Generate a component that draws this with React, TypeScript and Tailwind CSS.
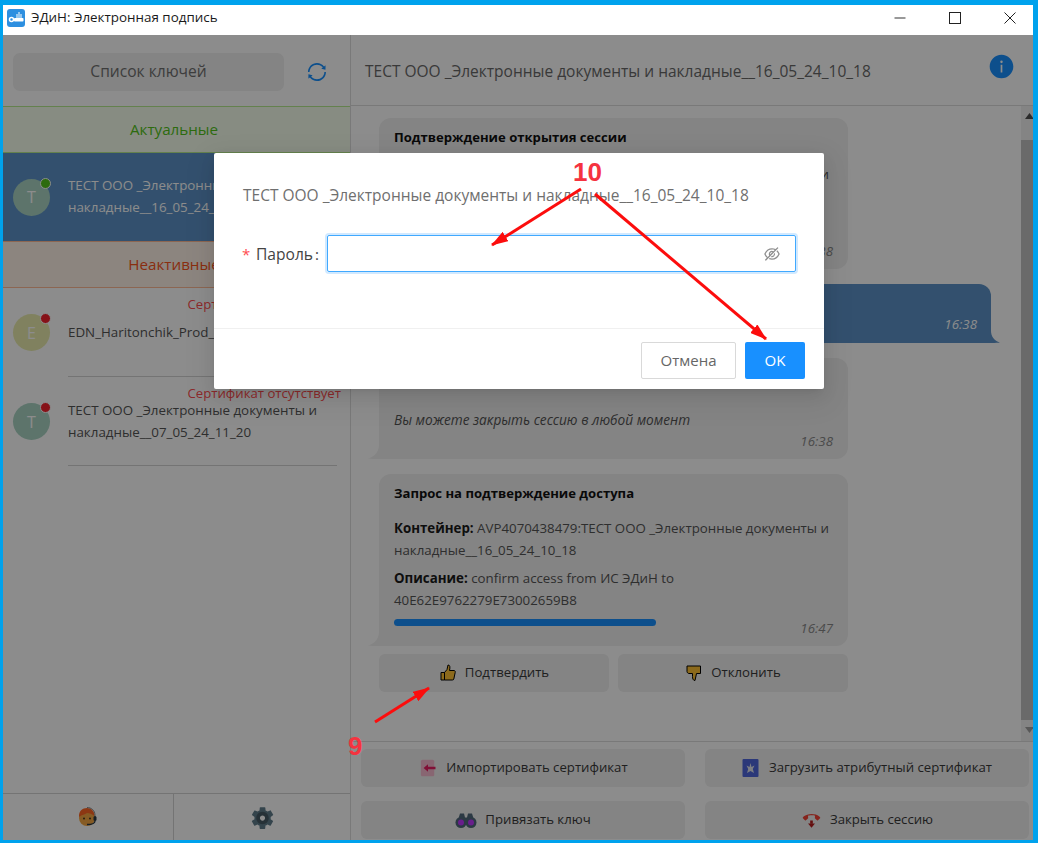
import type { ReactNode } from 'react'
import { AiFillInfoCircle, AiOutlineEyeInvisible, AiOutlineSync } from 'react-icons/ai'
import { FcEndCall, FcImport, FcSettings } from 'react-icons/fc'

function Avatar({ letter, color, dot }: { letter: string; color: string; dot: string }) {
  return (
    <div className={`relative w-[37px] h-[37px] rounded-full flex items-center justify-center text-[16px] text-white shrink-0 ${color}`}>
      {letter}
      <span className={`absolute top-[-1px] right-[-1px] w-[11px] h-[11px] rounded-full border border-white ${dot}`}></span>
    </div>
  )
}

function BubbleTail({ color }: { color: string }) {
  return (
    <svg className="absolute left-[-11px] bottom-0" width="24" height="14" viewBox="0 0 24 14">
      <path d="M11 0C11 6 7 12 0 13.500C4 14 8 14 24 14V0z" fill={color} />
    </svg>
  )
}

function Bubble({ title, time, h, children }: { title?: string; time: string; h: string; children?: ReactNode }) {
  return (
    <div className={`relative w-[469px] shrink-0 rounded-[12px] bg-[#f0f0f0] px-[15px] pt-[8px] text-[13.3px] leading-[22px] text-[#555] ${h}`}>
      <BubbleTail color="#f0f0f0" />
      {title && <div className="relative font-bold text-[13.1px] text-[#111]">{title}</div>}
      {children}
      <span className="absolute right-[15px] bottom-[7px] italic text-[#888]">{time}</span>
    </div>
  )
}

function ActionButton({ icon, label }: { icon: ReactNode; label: string }) {
  return (
    <div className="h-[38px] rounded-[6px] bg-[#f0f0f0] flex items-center justify-center gap-[8px] text-[13.2px] text-[#3a3a3a]">
      {icon}
      {label}
    </div>
  )
}

function KeyRow({ letter, color, dot, note, lines }: { letter: string; color: string; dot: string; note: string; lines: string[] }) {
  return (
    <div className="relative h-[89px] flex items-center gap-[18px] pl-[10px] pr-[13px] shrink-0">
      <Avatar letter={letter} color={color} dot={dot} />
      <div className="flex-1 h-full border-b border-[#d4d4d4] flex flex-col justify-center text-[13.35px] leading-[22px] text-[#555]">
        <div className="absolute right-[9px] top-[5px] leading-[22px] text-[13.2px] text-[#ff4d4f]">{note}</div>
        {lines.map((l) => (
          <div key={l}>{l}</div>
        ))}
      </div>
    </div>
  )
}

function ThumbUp() {
  return (
    <svg width="18" height="18" viewBox="0 0 18 18">
      <path d="M2 8.500h3.500V16H2zM5.500 8.500L8 5.500 9 1c2 0 2.300 2 1.500 5.500H15c1 0 1.500 1 1.200 2l-1.400 6.500c-.2.700-.6 1-1.500 1H5.500z" fill="#ffc233" stroke="#000" strokeWidth="1" />
    </svg>
  )
}

function ThumbDown() {
  return (
    <svg width="18" height="18" viewBox="0 0 18 18">
      <path d="M2 2h13.500v7.500h-4L10 16.500c-2 0-2.500-2-2.500-4V9.500H4c-1 0-2-1-2-2z" fill="#ffc233" stroke="#000" strokeWidth="1" />
    </svg>
  )
}

function Binoculars() {
  return (
    <svg width="22" height="16" viewBox="0 0 22 16">
      <path d="M3 8l2-6.500h4l1 4h2l1-4h4l2 6.500z" fill="#50697c" />
      <circle cx="6" cy="10.500" r="5.500" fill="#50697c" />
      <circle cx="16" cy="10.500" r="5.500" fill="#50697c" />
      <circle cx="6" cy="10.500" r="3" fill="#c038ff" />
      <circle cx="16" cy="10.500" r="3" fill="#c038ff" />
    </svg>
  )
}

function AttrCert() {
  return (
    <svg width="19" height="20" viewBox="0 0 19 20">
      <rect x="0.500" y="1" width="16" height="18" rx="1" fill="#4f66dd" />
      <path d="M8.500 5l1 4 3-1.500-1.700 3.500 1.200 4-3.500-2-3.500 2 1.200-4L4.500 7.500l3 1.500z" fill="#e2e6ee" />
    </svg>
  )
}

function Operator() {
  return (
    <svg width="20" height="22" viewBox="0 0 20 22">
      <circle cx="9" cy="12" r="8" fill="#f5a742" />
      <path d="M1 11C.5 5 4.500 2 9 2s7.500 3.500 7.500 8C14 8 11.500 7 9 7 7 8.500 4 8.500 1 11z" fill="#ff6424" />
      <path d="M9 1.500c4.500 0 8 3 8 8v3" fill="none" stroke="#888" strokeWidth="1" />
      <rect x="15.500" y="10" width="3" height="5" rx="1.500" fill="#2c3a44" />
      <path d="M17 15c0 2.500-3 3.500-8 3.500" fill="none" stroke="#2c3a44" strokeWidth="1.300" />
      <circle cx="6" cy="12.500" r="0.900" fill="#33261a" />
      <circle cx="12" cy="12.500" r="0.900" fill="#33261a" />
    </svg>
  )
}

export default function App() {
  return (
    <div className="relative w-[1038px] h-[843px] bg-[#00a2ed] pl-[3px] pr-[5px] pt-[5px] pb-[3px] overflow-hidden font-['Open_Sans','Noto_Sans',sans-serif]">
      {/* title bar */}
      <div className="h-[30px] bg-white flex items-center pl-[4px] pb-[5px]">
        <div className="w-[18px] h-[18px] rounded-[3px] bg-[#2d8fe0] flex items-center justify-center">
          <svg width="16" height="13" viewBox="0 0 16 13">
            <circle cx="3.500" cy="8.500" r="2" fill="none" stroke="white" strokeWidth="1.500" />
            <rect x="6" y="7" width="9.500" height="3.500" rx="0.800" fill="white" />
            <path d="M9 7V3M11 7V1M13 7V3" stroke="white" strokeWidth="1" />
          </svg>
        </div>
        <span className="ml-[6px] text-[13.4px] text-[#1a1a1a]">ЭДиН: Электронная подпись</span>
        <div className="ml-auto mr-[17px] flex items-center gap-[43px]">
          <svg width="12" height="12" viewBox="0 0 12 12"><path d="M0.500 6H11.500" stroke="#777" strokeWidth="1.500" /></svg>
          <svg width="12" height="12" viewBox="0 0 12 12"><rect x="0.500" y="0.500" width="11" height="11" fill="none" stroke="#222" strokeWidth="1" /></svg>
          <svg width="12" height="12" viewBox="0 0 12 12"><path d="M0.500 0.500L11.500 11.500M11.500 0.500L0.500 11.500" stroke="#222" strokeWidth="1" /></svg>
        </div>
      </div>

      <div className="relative flex h-[805px] bg-white">
        {/* left column */}
        <div className="w-[348px] shrink-0 border-r border-[#dcdcdc] flex flex-col">
          <div className="h-[71px] shrink-0 flex items-center pl-[10px] pr-[22px] pt-[2px] gap-[22px]">
            <div className="w-[272px] h-[38px] rounded-[7px] bg-[#f0f0f0] flex items-center justify-center text-[15.6px] text-[#707070]">Список ключей</div>
            <AiOutlineSync size={22} className="text-[#1890ff]" />
          </div>
          <div className="h-[47px] shrink-0 bg-[#f6ffed] border-y border-[#b7eb8f] flex items-center justify-center pr-[5px] text-[15.2px] text-[#52c41a]">Актуальные</div>
          <div className="h-[88px] shrink-0 bg-[#5d93c8] flex items-center pl-[10px] gap-[18px]">
            <Avatar letter="T" color="bg-[#a9d3c3]" dot="bg-[#52c41a]" />
            <div className="text-[13.35px] leading-[22px] text-white whitespace-nowrap pb-[2px]">
              <div>ТЕСТ ООО _Электронные документы и</div>
              <div>накладные__16_05_24_10_18</div>
            </div>
          </div>
          <div className="h-[47px] shrink-0 bg-[#fff2e8] border-y border-[#ffbb96] flex items-center justify-center pr-[5px] text-[15.2px] text-[#fa541c]">Неактивные</div>
          <KeyRow letter="E" color="bg-[#e9ecad]" dot="bg-[#f5222d]" note="Сертификат отсутствует" lines={['EDN_Haritonchik_Prod_22_04_24_10_14']} />
          <KeyRow letter="T" color="bg-[#a9d3c3]" dot="bg-[#f5222d]" note="Сертификат отсутствует" lines={['ТЕСТ ООО _Электронные документы и', 'накладные__07_05_24_11_20']} />
          <div className="flex-1"></div>
          <div className="h-[47px] shrink-0 border-t border-[#d4d4d4] flex">
            <div className="w-[171px] border-r border-[#d4d4d4] flex items-center justify-center"><Operator /></div>
            <div className="flex-1 flex items-center justify-center"><FcSettings size={25} /></div>
          </div>
        </div>

        {/* right column */}
        <div className="flex-1 flex flex-col min-w-0">
          <div className="h-[71px] shrink-0 border-b border-[#dcdcdc] flex items-center pl-[14px] pr-[18px] pt-[4px] text-[15.5px] text-[#696969]">
            <span>ТЕСТ ООО _Электронные документы и накладные__16_05_24_10_18</span>
            <AiFillInfoCircle size={27} className="ml-auto mt-[-12px] text-[#1890ff]" />
          </div>
          <div className="flex-1 flex min-h-0">
            <div className="flex-1 flex flex-col gap-[15px] pl-[28px] pt-[12px] overflow-hidden">
              <Bubble title="Подтверждение открытия сессии" time="16:38" h="h-[151px]">
                <span className="absolute right-[19px] top-[45px]">и</span>
              </Bubble>
              <div className="relative shrink-0 w-[612px] h-[59px] rounded-[12px] bg-[#5d93c8] text-[13.3px]">
                <svg className="absolute right-[-9px] bottom-0" width="24" height="12" viewBox="0 0 24 12">
                  <path d="M15 0C15 5 18 10 24 11.500C20 12 14 12 0 12V0z" fill="#5d93c8" />
                </svg>
                <span className="absolute right-[14px] bottom-[8px] italic text-white">16:38</span>
              </div>
              <Bubble time="16:38" h="h-[101px]">
                <div className="italic text-[13.67px] pt-[43px]">Вы можете закрыть сессию в любой момент</div>
              </Bubble>
              <Bubble title="Запрос на подтверждение доступа" time="16:47" h="h-[172px]">
                <div className="relative mt-[13px]"><b className="text-[#1a1a1a]">Контейнер:</b> AVP4070438479:ТЕСТ ООО _Электронные документы и<br />накладные__16_05_24_10_18</div>
                <div className="relative mt-[6px]"><b className="text-[#1a1a1a]">Описание:</b> confirm access from ИС ЭДиН to<br />40E62E9762279E73002659B8</div>
                <div className="relative mt-[8px] w-[262px] h-[7px] rounded-full bg-[#1890ff]"></div>
              </Bubble>
              <div className="flex gap-[9px] mt-[-7px] w-[469px] shrink-0">
                <div className="w-[230px]"><ActionButton icon={<ThumbUp />} label="Подтвердить" /></div>
                <div className="w-[230px]"><ActionButton icon={<ThumbDown />} label="Отклонить" /></div>
              </div>
            </div>
            <div className="w-[12px] shrink-0 overflow-hidden bg-[#f1f1f1]">
              <div className="w-[16px] flex flex-col">
                <div className="h-[34px] flex items-start justify-center pt-[7px]">
                  <svg width="9" height="6" viewBox="0 0 9 6"><path d="M4.500 0L9 6H0z" fill="#505050" /></svg>
                </div>
                <div className="h-[580px] bg-[#c1c1c1]"></div>
                <div className="h-[20px] flex items-start justify-center pt-[7px]">
                  <svg width="9" height="6" viewBox="0 0 9 6"><path d="M4.500 6L9 0H0z" fill="#a0a0a0" /></svg>
                </div>
              </div>
            </div>
          </div>
          <div className="h-[99px] shrink-0 border-t border-[#dcdcdc] pl-[10px] pr-[4px] pt-[7px] grid grid-cols-2 gap-x-[20px] gap-y-[14px] content-start overflow-hidden">
            <ActionButton label="Импортировать сертификат" icon={<FcImport size={20} />} />
            <ActionButton label="Загрузить атрибутный сертификат" icon={<AttrCert />} />
            <ActionButton label="Привязать ключ" icon={<Binoculars />} />
            <ActionButton label="Закрыть сессию" icon={<FcEndCall size={21} />} />
          </div>
        </div>

        {/* modal mask */}
        <div className="absolute inset-0 bg-black/45"></div>
      </div>

      {/* password dialog */}
      <div className="absolute left-[214px] top-[153px] w-[610px] h-[236px] bg-white rounded-[2px] shadow-[0_3px_6px_-4px_rgba(0,0,0,0.12),0_6px_16px_rgba(0,0,0,0.08),0_9px_28px_8px_rgba(0,0,0,0.05)] flex flex-col">
        <div className="pl-[29px] pt-[32px] text-[15.5px] leading-[20px] text-[#6f6f6f] whitespace-nowrap">ТЕСТ ООО _Электронные документы и накладные__16_05_24_10_18</div>
        <div className="flex items-center pl-[28px] mt-[30px]">
          <span className="text-[#ff4d4f] text-[15px] w-[14px] pt-[2px]">*</span>
          <span className="text-[15.6px] text-[#444] w-[57px] pt-[2px]">Пароль</span>
          <span className="text-[15px] text-[#444] w-[14px] pl-[2px] pt-[2px]">:</span>
          <div className="w-[469px] h-[37px] rounded-[2px] border border-[#40a9ff] shadow-[0_0_0_2px_rgba(24,144,255,0.2)] flex items-center justify-end pr-[14px]">
            <AiOutlineEyeInvisible size={18} className="text-[#8f8f8f]" />
          </div>
        </div>
        <div className="mt-auto h-[61px] border-t border-[#f0f0f0] flex items-start justify-end gap-[9px] pr-[19px] pt-[13px]">
          <div className="w-[95px] h-[37px] rounded-[2px] border border-[#d9d9d9] flex items-center justify-center text-[15px] text-[#666]">Отмена</div>
          <div className="w-[60px] h-[37px] rounded-[2px] bg-[#1890ff] flex items-center justify-center text-[15px] text-white">OK</div>
        </div>
      </div>

      {/* annotations */}
      <svg className="absolute left-0 top-0 pointer-events-none" width="1038" height="843" viewBox="0 0 1038 843">
        <defs>
          <marker id="head" markerUnits="userSpaceOnUse" markerWidth="17" markerHeight="11" refX="16" refY="5.500" orient="auto"><path d="M0 0L17 5.500 0 11z" fill="#fc0d0d" /></marker>
        </defs>
        <g stroke="#fc0d0d" strokeWidth="3">
          <line x1="581" y1="189" x2="492" y2="245" markerEnd="url(#head)" />
          <line x1="595" y1="194" x2="766" y2="339" markerEnd="url(#head)" />
          <line x1="375" y1="722" x2="429" y2="688" markerEnd="url(#head)" />
        </g>
      </svg>
      <div className="absolute left-[573px] top-[157px] text-[26px] leading-[30px] font-bold text-[#f5333f] font-['Liberation_Sans',sans-serif]">10</div>
      <div className="absolute left-[348px] top-[731px] text-[26px] leading-[30px] font-bold text-[#f5333f] font-['Liberation_Sans',sans-serif]">9</div>
    </div>
  )
}
